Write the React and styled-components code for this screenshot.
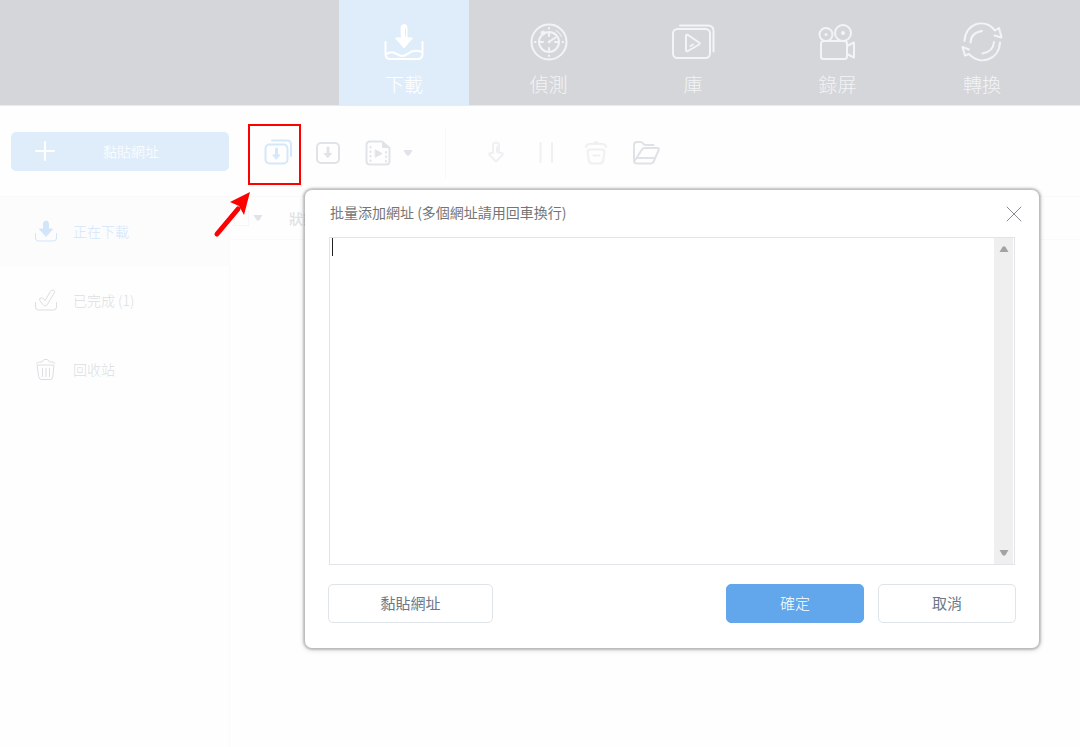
import React, { useState } from "react";
import styled, { createGlobalStyle } from "styled-components";

const GlobalStyle = createGlobalStyle`
  * {
    box-sizing: border-box;
  }
  body {
    margin: 0;
    background: #fefefe;
    font-family: "Noto Sans CJK TC", "Open Sans", sans-serif;
    font-weight: 300;
  }
  button,
  textarea {
    font: inherit;
  }
  button {
    border: 0;
    padding: 0;
    background: none;
    cursor: pointer;
  }
`;

const Page = styled.div`
  position: relative;
  display: flex;
  flex-direction: column;
  min-height: 100vh;
`;

const Header = styled.nav`
  display: flex;
  justify-content: space-between;
  height: 106px;
  padding: 0 33px 0 339px;
  background: #d5d6da;
  border-bottom: 1px solid #ebebed;
`;

const Tab = styled.button`
  display: flex;
  flex-direction: column;
  align-items: center;
  gap: 6px;
  width: 130px;
  padding-top: 20px;
  font-size: 19px;
  line-height: 28px;
  color: ${(props) => (props.$active ? "#ffffff" : "#f3f4f6")};
  background: ${(props) => (props.$active ? "#dfedfb" : "transparent")};
`;

const Toolbar = styled.div`
  display: flex;
  align-items: center;
  height: 91px;
  padding-left: 11px;
  border-bottom: 1px solid #f9f9fa;
`;

const Tools = styled.div`
  display: flex;
  align-items: center;
  padding-top: 4px;
`;

const PasteButton = styled.button`
  display: flex;
  align-items: center;
  width: 218px;
  height: 39px;
  margin-right: 24px;
  padding-left: 24px;
  gap: 48px;
  border-radius: 5px;
  background: #dfedfb;
  color: #ffffff;
  font-size: 14px;
`;

const ToolButton = styled.button`
  position: relative;
  display: flex;
  align-items: center;
  justify-content: center;
  width: ${(props) => (props.$narrow ? "10px" : "50px")};
  height: 50px;
  color: ${(props) => props.$color || "#e0e3e8"};
`;

const Divider = styled.div`
  width: 1px;
  height: 50px;
  margin: 0 25px 0 32px;
  background: #f7f8f9;
`;

const Highlight = styled.span`
  position: absolute;
  top: -4px;
  left: -5px;
  width: 53px;
  height: 61px;
  border: 2px solid #ff0000;
`;

const Pointer = styled.svg`
  position: absolute;
  top: 63px;
  left: -40px;
  pointer-events: none;
  overflow: visible;
`;

const Body = styled.div`
  display: flex;
  flex: 1;
`;

const Sidebar = styled.aside`
  width: 230px;
  border-right: 1px solid #fafafa;
`;

const SideItem = styled.button`
  display: flex;
  align-items: center;
  gap: 15px;
  width: 100%;
  height: 69px;
  padding: 0 0 2px 34px;
  font-size: 14px;
  color: ${(props) => (props.$active ? "#d3e6f9" : "#dcdee2")};
  background: ${(props) => (props.$active ? "#fcfcfd" : "transparent")};
`;

const List = styled.main`
  flex: 1;
`;

const ListHead = styled.div`
  display: flex;
  align-items: center;
  height: 43px;
  padding-left: 4px;
  font-size: 14px;
  font-weight: 500;
  color: #e0e2e5;
  border-bottom: 1px solid #fafafa;
`;

const CheckAll = styled.input`
  appearance: none;
  width: 15px;
  height: 15px;
  margin: 0;
  border: 1px solid #f6f6f7;
`;

const SortButton = styled.button`
  display: flex;
  justify-content: center;
  width: 18px;
  margin-right: 22px;
  color: #e0e3e8;
`;

const Overlay = styled.div`
  position: absolute;
  top: 0;
  left: 0;
  right: 0;
  padding: 190px 41px 0 305px;
`;

const Dialog = styled.section`
  padding: 0 23px 25px;
  border-radius: 7px;
  background: #ffffff;
  box-shadow: 0 0 2px 2px rgba(0, 0, 0, 0.2), 0 1px 5px 2px rgba(0, 0, 0, 0.1);
`;

const DialogHead = styled.div`
  display: flex;
  align-items: center;
  justify-content: space-between;
  height: 47px;
  padding: 0 0 4px 2px;
`;

const DialogTitle = styled.label`
  font-size: 14px;
  line-height: 20px;
  font-weight: 400;
  color: #757575;
`;

const CloseButton = styled.button`
  display: flex;
  margin-top: 4px;
  margin-right: -10px;
  padding: 4px;
  color: #8a8d92;
`;

const UrlBox = styled.div`
  position: relative;
  display: flex;
  height: 328px;
  margin: 0 1px;
  border: 1px solid #e1e4e9;
`;

const UrlInput = styled.textarea`
  flex: 1;
  border: 0;
  padding: 1px 4px;
  resize: none;
  outline: none;
  overflow: hidden;
  font-size: 14px;
  caret-color: transparent;
`;

const Caret = styled.span`
  position: absolute;
  top: 0;
  left: 2px;
  width: 1px;
  height: 18px;
  background: #222222;
`;

const ScrollBar = styled.div`
  display: flex;
  flex-direction: column;
  justify-content: space-between;
  width: 19px;
  margin-right: 1px;
  background: #efefef;
`;

const ScrollButton = styled.button`
  display: flex;
  align-items: center;
  justify-content: center;
  height: 22px;
  color: #a3a3a3;
`;

const Actions = styled.div`
  display: flex;
  gap: 14px;
  margin-top: 19px;
`;

const ActionButton = styled.button`
  width: ${(props) => (props.$wide ? "165px" : "138px")};
  height: 39px;
  margin-right: ${(props) => (props.$wide ? "auto" : "0")};
  padding-bottom: 2px;
  border: 1px solid ${(props) => (props.$primary ? "#62a7eb" : "#dfe4ea")};
  border-radius: 5px;
  background: ${(props) => (props.$primary ? "#62a7eb" : "#ffffff")};
  color: ${(props) => (props.$primary ? "#ffffff" : "#6b7886")};
  font-size: 15px;
  font-weight: ${(props) => (props.$primary ? 300 : 400)};
`;

const Icon = ({ size = 44, width = 2, children }) => (
  <svg
    width={size}
    height={size}
    viewBox={`0 0 ${size} ${size}`}
    fill="none"
    stroke="currentColor"
    strokeWidth={width}
    strokeLinecap="round"
    strokeLinejoin="round"
    aria-hidden="true"
  >
    {children}
  </svg>
);

const Triangle = ({ up }) => (
  <svg width="10" height="6" viewBox="0 0 10 6" fill="currentColor" aria-hidden="true">
    <path d={up ? "M0.500 6 L3.500 1 Q5-0.500 6.500 1 L9.500 6Z" : "M0.500 0 L3.500 5 Q5 6.500 6.500 5 L9.500 0Z"} />
  </svg>
);

const DownloadIcon = () => (
  <Icon>
    <path d="M3.500 22v12q0 5 5 5h27q5 0 5-5V22" />
    <path d="M4 34c5-2.500 7-2.500 11 .2s7 2.600 11-.6 9-3.400 14-1.600" />
    <path d="M19 7.500a3 3 0 0 1 6 0V18h5.500L22 28l-8.500-10H19z" fill="currentColor" strokeWidth="1" />
    <path d="M23.500 9v7" stroke="#dfedfb" strokeWidth="1" />
  </Icon>
);

const DetectIcon = () => (
  <Icon>
    <circle cx="22" cy="22" r="17.500" />
    <circle cx="22" cy="22" r="10" />
    <path d="M22 13v3M22 28v3M13 22h3M28 22h3M22 8v.5M22 35.500v.5M8 22h.5M35.500 22h.5M22.500 21.500l6-4" />
    <path d="M29 10.500q4 2 5.500 6" strokeWidth="1" />
    <circle cx="16" cy="13" r="2" fill="currentColor" strokeWidth="1" />
    <circle cx="22" cy="22" r="1" fill="currentColor" strokeWidth="1" />
  </Icon>
);

const LibraryIcon = () => (
  <Icon>
    <rect x="2" y="9" width="37" height="29" rx="4.500" />
    <path d="M9 5.500h28q5.500 0 5.500 5.500v20.500" />
    <path d="M15 16v14q0 2 2 1l11-6.500q1.500-1 0-2L17 15q-2-1-2 1zM19.500 26l2.500-1.500" />
  </Icon>
);

const RecordIcon = () => (
  <Icon>
    <circle cx="10" cy="14.500" r="6.500" />
    <circle cx="27" cy="13" r="8" />
    <circle cx="10" cy="14.500" r="1.500" fill="currentColor" stroke="none" />
    <circle cx="27" cy="13" r="2" fill="currentColor" stroke="none" />
    <rect x="5" y="21" width="26" height="18" rx="2.500" />
    <path d="M31 26l7-3.500v15L31 34" />
  </Icon>
);

const ConvertIcon = () => (
  <Icon>
    <path d="M4.500 21C5 4 24-3 35 10.500l4-2.500 2.500 9.500-7-2" />
    <path d="M40 22.500C39 40 20 46 9 34l-4 1.500-2.500-8.500 6.500 2.500" />
    <path d="M10.500 22.500q.5-10 11.500-11.500M34 22q-1 10-11.500 11.500" />
  </Icon>
);

const tabs = [
  { id: "download", label: "下載", icon: <DownloadIcon /> },
  { id: "detect", label: "偵測", icon: <DetectIcon /> },
  { id: "library", label: "庫", icon: <LibraryIcon /> },
  { id: "record", label: "錄屏", icon: <RecordIcon /> },
  { id: "convert", label: "轉換", icon: <ConvertIcon /> },
];

const sideItems = [
  {
    id: "active",
    label: "正在下載",
    icon: (
      <Icon size={24} width={1}>
        <path d="M1.500 14.500V19q0 3 3 3h15q3 0 3-3v-4.500" />
        <path d="M9.500 4.500a2.500 2.500 0 0 1 5 0V10h4L12 17.500 5.500 10h4z" fill="currentColor" />
      </Icon>
    ),
  },
  {
    id: "done",
    label: "已完成 (1)",
    icon: (
      <Icon size={24} width={1}>
        <path d="M1.500 14.500V19q0 3 3 3h15q3 0 3-3v-4.500" />
        <path d="M6 10.500q1.500-2 3.500.2l1.500 2 5.500-9.500q1.500-2 3.500-.8 1 1 .2 2.500L13 17q-1.500 2-3.500 0L6 13q-1-1.500 0-2.500z" />
      </Icon>
    ),
  },
  {
    id: "recycle",
    label: "回收站",
    icon: (
      <Icon size={24} width={1}>
        <path d="M2.500 6.500q.5-1.500 3-1.500H8l2-2.500h3.500L15.500 5h2.500q2.500 0 3 1.500" />
        <path d="M3.500 8h16.500l-1.200 12q-.3 2.500-2.500 2.500H7.200q-2.200 0-2.500-2.500z" />
        <path d="M8.500 11.500v8M12 11.500v8M15.500 11.500v8" />
      </Icon>
    ),
  },
];

function App() {
  const [tab, setTab] = useState("download");
  const [section, setSection] = useState("active");
  const [urls, setUrls] = useState("");

  return (
    <Page>
      <GlobalStyle />
      <Header>
        {tabs.map((item) => (
          <Tab
            type="button"
            key={item.id}
            $active={tab === item.id}
            onClick={() => setTab(item.id)}
          >
            {item.icon}
            {item.label}
          </Tab>
        ))}
      </Header>

      <Toolbar>
        <PasteButton type="button">
          <Icon size={20} width={2}>
            <path d="M1 10h18M10 1v18" />
          </Icon>
          黏貼網址
        </PasteButton>
        <Tools>
          <ToolButton type="button" $color="#d5e8fa" aria-label="批量添加網址">
            <Icon size={28}>
              <rect x="1.500" y="5.500" width="22" height="19" rx="4" />
              <path d="M8 1.500h15q4 0 4 4V17" />
              <path d="M12.500 10v7" strokeWidth="3" />
              <path d="M9 16h7l-3.500 4z" fill="currentColor" strokeWidth="1" />
            </Icon>
            <Highlight />
            <Pointer width="40" height="50" viewBox="0 0 40 50" aria-hidden="true">
              <path d="M4 43L25 18" stroke="#ff0000" strokeWidth="5" strokeLinecap="round" />
              <path d="M37 1L17 11l9 4 5 9z" fill="#ff0000" />
            </Pointer>
          </ToolButton>
          <ToolButton type="button" aria-label="下載">
            <Icon size={28}>
              <rect x="3" y="4" width="22" height="20" rx="4" />
              <path d="M14 9v7" strokeWidth="3" />
              <path d="M10.500 14.500h7L14 18.500z" fill="currentColor" strokeWidth="1" />
            </Icon>
          </ToolButton>
          <ToolButton type="button" aria-label="影片格式">
            <Icon size={28}>
              <path d="M18 2.500H6q-3.500 0-3.500 3.500v16q0 3.500 3.500 3.500h16q3.500 0 3.500-3.500V9z" />
              <path d="M18.500 3v5.500H25z" fill="currentColor" strokeWidth="1" />
              <path d="M11.500 11l6.500 3.500-6.500 3.500z" fill="currentColor" strokeWidth="1" />
              <path d="M6.500 8v14.500M22 13v9.500" strokeDasharray="0.500 4" />
            </Icon>
          </ToolButton>
          <ToolButton type="button" $narrow aria-label="更多格式">
            <Triangle />
          </ToolButton>
          <Divider />
          <ToolButton type="button" $color="#eff0f2" aria-label="開始">
            <Icon size={28}>
              <path d="M11 6.500a3 3 0 0 1 6 0V14h2.500q2 .5 1 2L15 21.500q-1 .8-2 0L7.500 16q-1-1.500 1-2H11zM15 8v5" />
            </Icon>
          </ToolButton>
          <ToolButton type="button" $color="#eff0f2" aria-label="暫停">
            <Icon size={28}>
              <path d="M8.500 4v19M20 4v19" />
            </Icon>
          </ToolButton>
          <ToolButton type="button" $color="#eff0f2" aria-label="刪除">
            <Icon size={28}>
              <path d="M4 8q.5-3 3.500-3h13q3 0 3.500 3M12 4q2-2 4 0" />
              <path d="M5.500 13q0-2.500 2.500-2.500h12q2.500 0 2.500 2.500L21 22q-.5 2.500-3 2.500h-8q-2.500 0-3-2.500zM11.500 16.500h6" />
            </Icon>
          </ToolButton>
          <ToolButton type="button" $color="#dfe2e7" aria-label="打開資料夾">
            <Icon size={28}>
              <path d="M21.500 6H14q-2 0-3-1.500T8.500 3H5Q2 3 2 6v16q0 2.500 3 2.500h13.500q2 0 3-1.500l5-11.500q1-2.500-1.500-2.500H13q-2 0-3 1.500L2.500 22M6 19h16" />
            </Icon>
          </ToolButton>
        </Tools>
      </Toolbar>

      <Body>
        <Sidebar>
          {sideItems.map((item) => (
            <SideItem
              type="button"
              key={item.id}
              $active={section === item.id}
              onClick={() => setSection(item.id)}
            >
              {item.icon}
              {item.label}
            </SideItem>
          ))}
        </Sidebar>
        <List>
          <ListHead>
            <CheckAll type="checkbox" aria-label="全選" />
            <SortButton type="button" aria-label="排序">
              <Triangle />
            </SortButton>
            狀態
          </ListHead>
        </List>
      </Body>

      <Overlay>
        <Dialog role="dialog" aria-labelledby="urls-title">
          <DialogHead>
            <DialogTitle id="urls-title" htmlFor="urls">
              批量添加網址 (多個網址請用回車換行)
            </DialogTitle>
            <CloseButton type="button" aria-label="關閉">
              <Icon size={16} width={1}>
                <path d="M1 1l14 14M15 1L1 15" />
              </Icon>
            </CloseButton>
          </DialogHead>
          <UrlBox>
            <UrlInput id="urls" value={urls} onChange={(e) => setUrls(e.target.value)} />
            {!urls && <Caret />}
            <ScrollBar>
              <ScrollButton type="button" aria-label="向上捲動">
                <Triangle up />
              </ScrollButton>
              <ScrollButton type="button" aria-label="向下捲動">
                <Triangle />
              </ScrollButton>
            </ScrollBar>
          </UrlBox>
          <Actions>
            <ActionButton type="button" $wide>
              黏貼網址
            </ActionButton>
            <ActionButton type="button" $primary>
              確定
            </ActionButton>
            <ActionButton type="button">取消</ActionButton>
          </Actions>
        </Dialog>
      </Overlay>
    </Page>
  );
}

export default App;
